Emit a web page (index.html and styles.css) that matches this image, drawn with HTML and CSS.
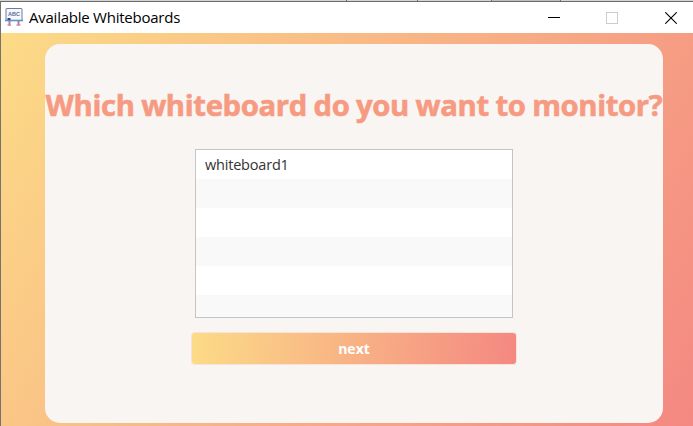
FILE: index.html
```html
<!DOCTYPE html>
<html lang="en">
<head>
<meta charset="utf-8">
<title>Available Whiteboards</title>
<link rel="stylesheet" href="styles.css">
</head>
<body>
<div class="window">
  <header class="titlebar">
    <svg class="app-icon" width="20" height="20" viewBox="0 0 20 20">
      <path d="M5.5 14v4.500M14.500 14v4.500" stroke="#c07a92" stroke-width="2"/>
      <path d="M3.500 18h3.500M12.500 18h4" stroke="#d08da0" stroke-width="1.4"/>
      <rect x="2" y="1.500" width="16" height="12" rx=".5" fill="#f5f8ff" stroke="#6f7c9c"/>
      <path d="M1 13.500h18" stroke="#5c93c9" stroke-width="1.6"/>
      <path d="M3.500 12h3" stroke="#294d92" stroke-width="2"/>
      <text class="icon-label" x="10" y="9" text-anchor="middle">ABC</text>
    </svg>
    <span class="title">Available Whiteboards</span>
    <div class="controls">
      <svg width="12" height="12" viewBox="0 0 12 12"><path d="M0 5.5h12" stroke="#000"/></svg>
      <svg width="12" height="12" viewBox="0 0 12 12"><rect x=".5" y=".5" width="11" height="11" fill="none" stroke="#ccc"/></svg>
      <svg width="12" height="12" viewBox="0 0 12 12"><path d="M.3.3l11.4 11.4M11.7.3L.3 11.7" stroke="#000" stroke-width="1.1"/></svg>
    </div>
  </header>
  <main class="content">
    <section class="card">
      <h1 class="heading">Which whiteboard do you want to monitor?</h1>
      <ul class="list">
        <li>whiteboard1</li><li></li><li></li><li></li><li></li><li></li>
      </ul>
      <button class="next">next</button>
    </section>
  </main>
</div>
</body>
</html>
```
FILE: styles.css
```css
* { box-sizing: border-box; }
body {
  margin: 0;
  height: 426px;
  overflow: hidden;
  font-family: "Open Sans", "Noto Sans", sans-serif;
  background: linear-gradient(90deg, #d4d4d4 346px, #6e6e6e 346px 347px, #d4d4d4 347px 417px, #6e6e6e 417px 418px, #d4d4d4 418px 491px, #6e6e6e 491px 492px, #bdbdbd 492px 560px, #6e6e6e 560px 561px, #d4d4d4 561px);
}
.window {
  height: 425px;
  margin-top: 1px;
  border-top: 1px solid #6c6c6c;
  border-left: 1px solid #78726f;
  display: flex;
  flex-direction: column;
}
.titlebar {
  height: 31px;
  flex: none;
  display: flex;
  align-items: center;
  background: #fff;
  padding: 0 16px 0 3px;
}
.app-icon { flex: none; margin-top: -1px; }
.icon-label { font: bold 5.5px "Liberation Sans", sans-serif; fill: #626b8c; }
.title {
  margin: -2px 0 0 5px;
  font-size: 15px;
  line-height: 20px;
  letter-spacing: -0.24px;
  white-space: nowrap;
  color: #000;
}
.controls { display: flex; gap: 47px; margin-left: auto; }
.controls svg { display: block; }
.controls svg:first-child { margin-right: -1px; }
.content {
  flex: 1;
  padding: 11px 30px 3px 44px;
  background: linear-gradient(119.6deg, #fcdb87, #f48882);
}
.card {
  height: 379px;
  border-radius: 15px;
  background: #f9f5f2;
  display: flex;
  flex-direction: column;
  align-items: center;
}
.heading {
  margin: 41px 0 0;
  height: 40px;
  line-height: 40px;
  font-size: 29.3px;
  font-weight: 700;
  letter-spacing: -0.38px;
  word-spacing: -0.6px;
  -webkit-text-stroke: 0.6px #f69b82;
  white-space: nowrap;
  color: #f69b82;
}
.list {
  width: 318px;
  height: 169px;
  margin: 24px 0 0;
  padding: 0;
  list-style: none;
  overflow: hidden;
  border: 1px solid #c4c4c4;
  background: #fff;
}
.list li {
  height: 29px;
  padding-left: 9px;
  font-size: 14.5px;
  line-height: 30px;
  letter-spacing: -0.2px;
  color: #333;
}
.list li:nth-child(even) { background: #f9f9f9; }
.next {
  width: 324px;
  height: 31px;
  margin: 15px 0 0;
  padding: 0;
  border: 0;
  border-radius: 3px;
  background: linear-gradient(95.5deg, #fcdb87, #f48882);
  box-shadow: 0 0 0 1px rgba(246, 155, 130, .2);
  color: #fff;
  font: 700 14px/31px "Open Sans", "Noto Sans", sans-serif;
}
```
